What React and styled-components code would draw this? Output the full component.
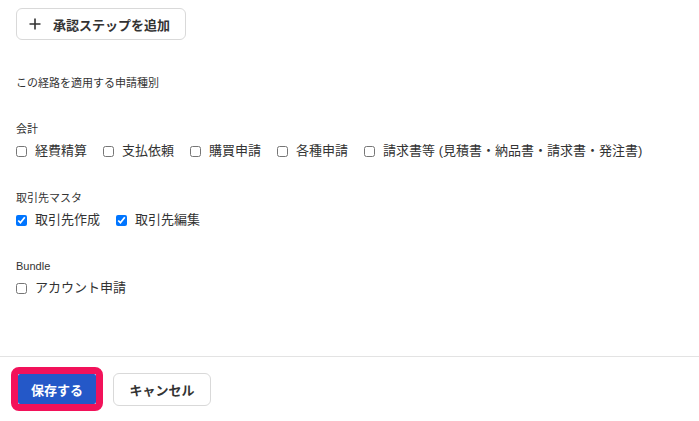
import React from 'react';
import styled, { createGlobalStyle } from 'styled-components';

const GlobalStyle = createGlobalStyle`
  html, body {
    margin: 0;
    padding: 0;
    background: #fff;
  }
  body {
    font-family: "Liberation Sans", "Noto Sans CJK JP", sans-serif;
    color: #333;
  }
`;

const Page = styled.div`
  width: 699px;
  height: 421px;
  display: flex;
  flex-direction: column;
  overflow: hidden;
`;

const Body = styled.div`
  padding: 8px 16px 0;
  height: 356px;
  flex-shrink: 0;
  box-sizing: border-box;
  display: flex;
  flex-direction: column;
  align-items: flex-start;
`;

const AddButton = styled.button`
  height: 32px;
  width: 170px;
  box-sizing: border-box;
  display: flex;
  align-items: center;
  gap: 12px;
  padding: 0 12px;
  background: #fff;
  border: 1px solid #d9d9d9;
  border-radius: 6px;
  font-family: inherit;
  font-size: 13px;
  font-weight: bold;
  color: #333;
`;

const SectionTitle = styled.div`
  margin-top: 35px;
  font-size: 11px;
  line-height: 16px;
`;

const Group = styled.div`
  margin-top: ${p => p.$top}px;
  display: flex;
  flex-direction: column;
  gap: 4px;
`;

const GroupLabel = styled.div`
  font-size: 11px;
  line-height: 16px;
`;

const Row = styled.div`
  display: flex;
  align-items: center;
  height: 20px;
  gap: 16px;
`;

const Option = styled.label`
  display: flex;
  align-items: center;
  gap: 8px;
  font-size: 13px;
  line-height: 20px;
  color: #333;
`;

const Box = styled.input`
  width: 11px;
  height: 11px;
  margin: 0;
`;

const Footer = styled.div`
  border-top: 1px solid #e3e3e3;
  padding: 10px 0 0 11px;
  display: flex;
  align-items: center;
  gap: 10px;
`;

const Highlight = styled.div`
  border: 7px solid #f2125a;
  border-radius: 8px;
  display: flex;
`;

const SaveButton = styled.button`
  width: 78px;
  height: 30px;
  border: none;
  border-radius: 2px;
  background: #2458c8;
  color: #fff;
  font-family: inherit;
  font-size: 13px;
  font-weight: bold;
  padding: 0;
`;

const CancelButton = styled.button`
  width: 98px;
  height: 33px;
  border: 1px solid #d9d9d9;
  border-radius: 6px;
  background: #fff;
  color: #333;
  font-family: inherit;
  font-size: 13px;
  font-weight: bold;
  padding: 0;
`;

const PlusIcon = () => (
  <svg width="12" height="12" viewBox="0 0 12 12">
    <path d="M6 0.5v11M0.5 6h11" stroke="#333" strokeWidth="1.6" fill="none" />
  </svg>
);

const groups = [
  {
    label: '会計',
    top: 30,
    items: [
      ['経費精算', false],
      ['支払依頼', false],
      ['購買申請', false],
      ['各種申請', false],
      ['請求書等 (見積書・納品書・請求書・発注書)', false],
    ],
  },
  {
    label: '取引先マスタ',
    top: 29,
    items: [
      ['取引先作成', true],
      ['取引先編集', true],
    ],
  },
  {
    label: 'Bundle',
    top: 28,
    items: [['アカウント申請', false]],
  },
];

const App = () => (
  <Page>
    <GlobalStyle />
    <Body>
      <AddButton>
        <PlusIcon />
        承認ステップを追加
      </AddButton>
      <SectionTitle>この経路を適用する申請種別</SectionTitle>
      {groups.map(g => (
        <Group key={g.label} $top={g.top}>
          <GroupLabel>{g.label}</GroupLabel>
          <Row>
            {g.items.map(([name, checked]) => (
              <Option key={name}>
                <Box type="checkbox" defaultChecked={checked} />
                {name}
              </Option>
            ))}
          </Row>
        </Group>
      ))}
    </Body>
    <Footer>
      <Highlight>
        <SaveButton>保存する</SaveButton>
      </Highlight>
      <CancelButton>キャンセル</CancelButton>
    </Footer>
  </Page>
);

export default App;
